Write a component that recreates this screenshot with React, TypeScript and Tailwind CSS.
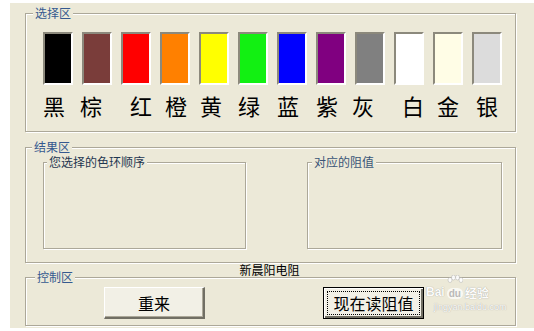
import React from "react";

const swatches = [
  "bg-[#000000]",
  "bg-[#7a3d3a]",
  "bg-[#ff0000]",
  "bg-[#ff8000]",
  "bg-[#ffff00]",
  "bg-[#12f012]",
  "bg-[#0000ff]",
  "bg-[#800080]",
  "bg-[#808080]",
  "bg-[#ffffff]",
  "bg-[#fffde6]",
  "bg-[#dcdcdc]",
];

const labels = [
  { t: "黑", c: "ml-[0px]" },
  { t: "棕", c: "ml-[15px]" },
  { t: "红", c: "ml-[28px]" },
  { t: "橙", c: "ml-[13px]" },
  { t: "黄", c: "ml-[13px]" },
  { t: "绿", c: "ml-[16px]" },
  { t: "蓝", c: "ml-[17px]" },
  { t: "紫", c: "ml-[17px]" },
  { t: "灰", c: "ml-[14px]" },
  { t: "白", c: "ml-[28px]" },
  { t: "金", c: "ml-[13px]" },
  { t: "银", c: "ml-[17px]" },
];

function Frame({
  label,
  labelClass,
  className,
  children,
}: {
  label: string;
  labelClass: string;
  className: string;
  children?: React.ReactNode;
}) {
  return (
    <div
      className={`relative border border-[#aca899] shadow-[1px_1px_0_#ffffff,inset_1px_1px_0_#ffffff] ${className}`}
    >
      <span
        className={`absolute -top-[8px] bg-[#ece9d8] px-[2px] text-[12px] leading-[14px] whitespace-nowrap ${labelClass}`}
      >
        {label}
      </span>
      {children}
    </div>
  );
}

export default function App() {
  return (
    <div className="w-[534px] h-[331px] bg-white pl-[10px] pt-[3px] overflow-hidden font-['Noto_Sans_CJK_SC',sans-serif]">
      <div className="relative w-[524px] h-[325px] bg-[#ece9d8] pl-[15px] pt-[10px] flex flex-col">
        {/* 选择区 */}
        <Frame
          label="选择区"
          labelClass="left-[7px] text-[#35598f]"
          className="w-[491px] h-[119px] shrink-0 pl-[17px] pt-[18px]"
        >
          <div className="flex gap-[9px]">
            {swatches.map((s, i) => (
              <div
                key={i}
                className={`w-[30px] h-[53px] border-2 border-t-[#8c897c] border-l-[#8c897c] border-b-[#ffffff] border-r-[#ffffff] ${s}`}
              />
            ))}
          </div>
          <div className="flex mt-[8px] text-[22px] leading-[24px] text-black">
            {labels.map((l) => (
              <span key={l.t} className={`w-[22px] text-center ${l.c}`}>
                {l.t}
              </span>
            ))}
          </div>
        </Frame>

        {/* 结果区 */}
        <Frame
          label="结果区"
          labelClass="left-[6px] text-[#35598f]"
          className="mt-[15px] w-[491px] h-[116px] shrink-0 pl-[17px] pt-[14px] flex items-start"
        >
          <Frame
            label="您选择的色环顺序"
            labelClass="left-[3px] text-[#1f3650]"
            className="w-[203px] h-[87px] shrink-0"
          />
          <Frame
            label="对应的阻值"
            labelClass="left-[4px] text-[#3a5577]"
            className="ml-[61px] w-[195px] h-[87px] shrink-0"
          />
        </Frame>

        <div className="w-[491px] h-[14px] shrink-0 text-center text-[12px] leading-[14px] text-black pr-[2px]">
          新晨阳电阻
        </div>

        {/* 控制区 */}
        <Frame
          label="控制区"
          labelClass="left-[9px] text-[#35598f]"
          className="w-[491px] h-[49px] shrink-0 pl-[78px] pt-[9px] flex items-start"
        >
          <button className="w-[101px] h-[32px] bg-[#f2f0e6] border-t border-l border-t-white border-l-white border-b-2 border-r-2 border-b-[#716f64] border-r-[#716f64] shadow-[inset_-1px_-1px_0_#aca899] text-[16px] leading-[20px] text-black flex items-center justify-center">
            重来
          </button>
          <button className="ml-[118px] w-[101px] h-[32px] bg-[#f2f0e6] border border-black shadow-[inset_1px_1px_0_#ffffff,inset_-2px_-2px_0_#716f64] p-[3px] text-[16px] leading-[20px] text-black">
            <span className="flex w-full h-full items-center justify-center border border-dotted border-black">
              现在读阻值
            </span>
          </button>
        </Frame>

        {/* watermark */}
        <div className="absolute left-[416px] top-[272px] flex flex-col items-start text-white opacity-90 pointer-events-none">
          <div className="flex items-end gap-[2px] font-['Liberation_Sans',sans-serif] font-bold text-[12px] leading-[13px] [text-shadow:0_0_1px_#8a8a8a]">
            <span>Bai</span>
            <span className="flex flex-col items-center">
              <svg width="16" height="12" viewBox="0 0 16 12" className="mb-[1px]">
                <ellipse cx="3" cy="5" rx="2" ry="2.5" fill="#ffffff" stroke="#aaa" strokeWidth="0.5" />
                <ellipse cx="6.5" cy="2.5" rx="2" ry="2.5" fill="#ffffff" stroke="#aaa" strokeWidth="0.5" />
                <ellipse cx="10.5" cy="2.5" rx="2" ry="2.5" fill="#ffffff" stroke="#aaa" strokeWidth="0.5" />
                <ellipse cx="14" cy="5" rx="2" ry="2.5" fill="#ffffff" stroke="#aaa" strokeWidth="0.5" />
              </svg>
              <span className="rounded-full bg-white/80 px-[2px] text-[#b5b5b5] text-[10px] leading-[11px] [text-shadow:none]">du</span>
            </span>
            <span className="font-['Noto_Sans_CJK_SC',sans-serif] text-[12px]">经验</span>
          </div>
          <div className="ml-[8px] mt-[3px] font-['Liberation_Sans',sans-serif] text-[9px] leading-[10px] [text-shadow:0_0_1px_#8a8a8a]">
            jingyan.baidu.com
          </div>
        </div>
      </div>
    </div>
  );
}
